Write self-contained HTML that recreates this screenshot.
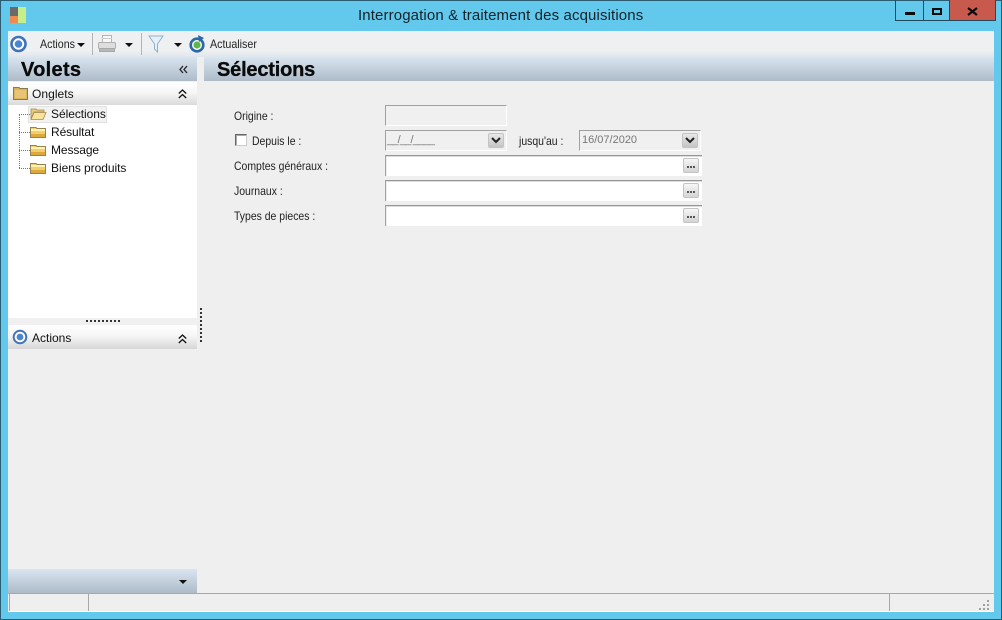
<!DOCTYPE html>
<html><head><meta charset="utf-8">
<style>
html,body{margin:0;padding:0}
body{width:1002px;height:620px;overflow:hidden;position:relative;background:#62c9ec;font-family:"Liberation Sans",sans-serif;font-size:12px;color:#111}
div,span,svg{position:absolute;box-sizing:border-box}
.t{white-space:nowrap;line-height:14px}
.l{font-size:12px;color:#222;transform:scaleX(.87);transform-origin:0 0}
.head{background:linear-gradient(#d9e5f0,#adbbc9)}
.inp{background:#fff;border-top:1px solid #969696;border-left:1px solid #a4a4a4;box-shadow:inset 0 1px #dcdcdc,inset 1px 0 #ececec;height:21px}
.dis{background:#f0f0f0;border-top:1px solid #a0a0a0;border-left:1px solid #a0a0a0;border-right:1px solid #fff;border-bottom:1px solid #fff;height:21px}
.btn{width:16px;height:15px;border:1px solid #c4c4c4;border-radius:2px;background:linear-gradient(#f6f6f6,#d4d4d4)}
</style></head>
<body>
<div style="left:0;top:0;width:1002px;height:620px;border:1px solid #2b5d72"></div>
<!-- app icon -->
<div style="left:10px;top:7px;width:8px;height:9px;background:#6a6a6a"></div>
<div style="left:10px;top:16px;width:8px;height:7px;background:#f08a4e"></div>
<div style="left:18px;top:7px;width:8px;height:16px;background:#c6ee8a"></div>
<div class="t" style="left:358px;top:8px;font-size:15px;line-height:16px;letter-spacing:.12px;color:#15222a">Interrogation &amp; traitement des acquisitions</div>
<!-- window buttons -->
<div style="left:895px;top:0;width:29px;height:21px;border:1px solid #23495a;border-top:0;border-right:0"></div>
<div style="left:923px;top:0;width:27px;height:21px;border:1px solid #23495a;border-top:0"></div>
<div style="left:950px;top:0;width:46px;height:21px;background:#c75a4c;border:1px solid #23495a;border-top:0;border-left:0"></div>
<div style="left:905px;top:12px;width:10px;height:3px;background:#0c0c0c"></div>
<div style="left:932px;top:8px;width:10px;height:7px;border:2px solid #0c0c0c"></div>
<svg style="left:967px;top:7px" width="11" height="9"><path d="M1 1L10 8M10 1L1 8" stroke="#0c0c0c" stroke-width="2.2"/></svg>
<!-- client -->
<div style="left:8px;top:31px;width:986px;height:581px;background:#efefef"></div>
<!-- toolbar -->
<div style="left:8px;top:31px;width:986px;height:26px;background:linear-gradient(#eef0f1 0%,#eef0f1 75%,#dde6ee 100%)"></div>
<svg style="left:10px;top:35px" width="18" height="18"><circle cx="8.500" cy="9" r="7" fill="#fff" stroke="#3f72b8" stroke-width="2.600"/><circle cx="8.500" cy="9" r="3.800" fill="#4a86d0"/></svg>
<div class="t l" style="left:40px;top:37px;transform:scaleX(.89)">Actions</div>
<svg style="left:77px;top:43px" width="8" height="5"><path d="M0 0H8L4 4Z" fill="#111"/></svg>
<div style="left:92px;top:33px;width:1px;height:22px;background:#b4b4b4"></div>
<svg style="left:97px;top:34px" width="20" height="19"><rect x="5.500" y="1.500" width="9" height="7" fill="#f8f8f8" stroke="#b4b4b4"/><rect x="5" y="4" width="10" height="1" fill="#ccc"/><rect x="1.500" y="8.500" width="17" height="6" rx="1" fill="#dedede" stroke="#b0b0b0"/><rect x="2.500" y="14.500" width="15" height="3" fill="#b8b8b8" stroke="#a8a8a8"/></svg>
<svg style="left:125px;top:43px" width="9" height="5"><path d="M0 0H8L4 4Z" fill="#111"/></svg>
<div style="left:141px;top:33px;width:1px;height:22px;background:#b4b4b4"></div>
<svg style="left:148px;top:35px" width="17" height="18"><path d="M1 1H15L9.500 9V17L6.500 14V9Z" fill="#e6f0f6" stroke="#8db4cc"/></svg>
<svg style="left:174px;top:43px" width="9" height="5"><path d="M0 0H8L4 4Z" fill="#111"/></svg>
<svg style="left:188px;top:35px" width="18" height="18"><circle cx="9" cy="10" r="6.300" fill="#fff" stroke="#2c68a8" stroke-width="2.600"/><circle cx="9" cy="10" r="3.600" fill="#5cb848"/><path d="M10 0L16 3L11 7Z" fill="#2c68a8"/></svg>
<div class="t l" style="left:210px;top:37px;transform:scaleX(.89)">Actualiser</div>
<!-- left pane -->
<div class="head" style="left:8px;top:57px;width:189px;height:24px"></div>
<div class="t" style="left:21px;top:59px;font-size:20px;line-height:22px;font-weight:bold;letter-spacing:.3px;color:#0a0a0a;-webkit-text-stroke:.3px #0a0a0a">Volets</div>
<svg style="left:179px;top:65px" width="9" height="9"><path d="M4 1L1 4.500L4 8M8 1L5 4.500L8 8" fill="none" stroke="#222" stroke-width="1.300"/></svg>
<div style="left:8px;top:82px;width:189px;height:23px;background:linear-gradient(#fff 0%,#f6f6f6 45%,#dadada 100%)"></div>
<svg style="left:13px;top:86px" width="15" height="14"><path d="M.5 1.500H6L7 2.500H14.500V13.500H.5Z" fill="#d8b45c" stroke="#8a7a50"/><rect x="2" y="4" width="11" height="8" fill="#e8c474"/></svg>
<div class="t" style="left:32px;top:87px;letter-spacing:.05px">Onglets</div>
<svg style="left:178px;top:89px" width="9" height="10"><path d="M.8 4.500L4.500 1L8.200 4.500M.8 9L4.500 5.500L8.200 9" fill="none" stroke="#111" stroke-width="1.300"/></svg>
<!-- tree -->
<div style="left:8px;top:105px;width:189px;height:215px;background:#fff"></div>
<div style="left:28px;top:106px;width:79px;height:17px;background:#f2f2f2;border:1px solid #e2e2e2"></div>
<div style="left:19px;top:114px;width:1px;height:54px;border-left:1px dotted #777"></div>
<div style="left:19px;top:114px;width:11px;border-top:1px dotted #777"></div>
<div style="left:19px;top:132px;width:11px;border-top:1px dotted #777"></div>
<div style="left:19px;top:150px;width:11px;border-top:1px dotted #777"></div>
<div style="left:19px;top:168px;width:11px;border-top:1px dotted #777"></div>
<svg style="left:30px;top:108px" width="17" height="12"><path d="M1 1H6L7 2H14V4H4L1 11Z" fill="#e9cc7c" stroke="#a08a50" stroke-width=".8"/><path d="M4 4.500H16L13 11.500H1Z" fill="#fbe39a" stroke="#a08a50" stroke-width=".8"/></svg>
<svg style="left:30px;top:126px" width="16" height="12"><path d="M.5 1.500H6L7 2.500H15.500V11.500H.5Z" fill="#f2cf6c" stroke="#93834f"/><rect x="1" y="3" width="14" height="2" fill="#fff1b8"/><rect x="1" y="8" width="14" height="3" fill="#dcaa3c"/></svg>
<svg style="left:30px;top:144px" width="16" height="12"><path d="M.5 1.500H6L7 2.500H15.500V11.500H.5Z" fill="#f2cf6c" stroke="#93834f"/><rect x="1" y="3" width="14" height="2" fill="#fff1b8"/><rect x="1" y="8" width="14" height="3" fill="#dcaa3c"/></svg>
<svg style="left:30px;top:162px" width="16" height="12"><path d="M.5 1.500H6L7 2.500H15.500V11.500H.5Z" fill="#f2cf6c" stroke="#93834f"/><rect x="1" y="3" width="14" height="2" fill="#fff1b8"/><rect x="1" y="8" width="14" height="3" fill="#dcaa3c"/></svg>
<div class="t" style="left:51px;top:107px;letter-spacing:-.05px">Sélections</div>
<div class="t" style="left:51px;top:125px;letter-spacing:-.1px">Résultat</div>
<div class="t" style="left:51px;top:143px;letter-spacing:-.1px">Message</div>
<div class="t" style="left:51px;top:161px;letter-spacing:-.05px">Biens produits</div>
<!-- splitter -->
<div style="left:8px;top:318px;width:189px;height:7px;background:#f0f0f0"></div>
<div style="left:86px;top:320px;width:35px;height:2px;background:repeating-linear-gradient(90deg,#333 0 2px,transparent 2px 4px)"></div>
<div style="left:200px;top:308px;width:1.500px;height:35px;background:repeating-linear-gradient(#333 0 2px,transparent 2px 4px)"></div>
<div style="left:8px;top:325px;width:189px;height:24px;background:linear-gradient(#fff 0%,#f6f6f6 45%,#d6d6d6 100%)"></div>
<svg style="left:12px;top:329px" width="16" height="16"><circle cx="8" cy="8" r="6.300" fill="#fff" stroke="#4474b4" stroke-width="2"/><circle cx="8" cy="8" r="3.400" fill="#4a86d0"/></svg>
<div class="t" style="left:32px;top:331px">Actions</div>
<svg style="left:178px;top:334px" width="9" height="10"><path d="M.8 4.500L4.500 1L8.200 4.500M.8 9L4.500 5.500L8.200 9" fill="none" stroke="#111" stroke-width="1.300"/></svg>
<div class="head" style="left:8px;top:569px;width:189px;height:24px"></div>
<svg style="left:179px;top:580px" width="9" height="5"><path d="M0 0H8L4 4Z" fill="#111"/></svg>
<!-- right header -->
<div class="head" style="left:204px;top:57px;width:790px;height:24px"></div>
<div class="t" style="left:217px;top:59px;font-size:20px;line-height:22px;font-weight:bold;letter-spacing:-.2px;color:#0a0a0a;-webkit-text-stroke:.3px #0a0a0a">Sélections</div>
<!-- form -->
<div class="t l" style="left:234px;top:109px">Origine :</div>
<div class="dis" style="left:385px;top:105px;width:122px"></div>
<div style="left:235px;top:134px;width:12px;height:12px;background:#fff;border:1px solid #666;border-right-color:#ccc;border-bottom-color:#ccc;box-shadow:inset 1px 1px #aaa"></div>
<div class="t l" style="left:252px;top:134px">Depuis le :</div>
<div class="dis" style="left:385px;top:130px;width:122px"></div>
<div class="t" style="left:387px;top:133px;color:#777;font-size:11px;letter-spacing:-.8px">__/__/____</div>
<div class="btn" style="left:488px;top:133px;background:linear-gradient(#e8e8e8,#c4c4c4)"></div>
<svg style="left:491px;top:137px" width="10" height="7"><path d="M1 1L5 5L9 1" fill="none" stroke="#222" stroke-width="2"/></svg>
<div class="t l" style="left:519px;top:134px">jusqu'au :</div>
<div class="dis" style="left:579px;top:130px;width:122px"></div>
<div class="t" style="left:582px;top:133px;color:#777;font-size:11px">16/07/2020</div>
<div class="btn" style="left:682px;top:133px;background:linear-gradient(#e8e8e8,#c4c4c4)"></div>
<svg style="left:685px;top:137px" width="10" height="7"><path d="M1 1L5 5L9 1" fill="none" stroke="#222" stroke-width="2"/></svg>
<div class="t l" style="left:234px;top:159px">Comptes généraux :</div>
<div class="inp" style="left:385px;top:155px;width:317px"></div>
<div class="btn" style="left:683px;top:158px"></div>
<div style="left:687px;top:166px;width:8px;height:2px;background:repeating-linear-gradient(90deg,#555 0 2px,transparent 2px 3px)"></div>
<div class="t l" style="left:234px;top:184px">Journaux :</div>
<div class="inp" style="left:385px;top:180px;width:317px"></div>
<div class="btn" style="left:683px;top:183px"></div>
<div style="left:687px;top:191px;width:8px;height:2px;background:repeating-linear-gradient(90deg,#555 0 2px,transparent 2px 3px)"></div>
<div class="t l" style="left:234px;top:209px">Types de pieces :</div>
<div class="inp" style="left:385px;top:205px;width:317px"></div>
<div class="btn" style="left:683px;top:208px"></div>
<div style="left:687px;top:216px;width:8px;height:2px;background:repeating-linear-gradient(90deg,#555 0 2px,transparent 2px 3px)"></div>
<!-- status bar -->
<div style="left:8px;top:593px;width:986px;height:19px;background:#efefef;border-top:1px solid #a8a8a8;border-bottom:1px solid #fff"></div>
<div style="left:9px;top:594px;width:1px;height:17px;background:#a8a8a8"></div>
<div style="left:88px;top:594px;width:1px;height:17px;background:#a8a8a8"></div>
<div style="left:889px;top:594px;width:1px;height:17px;background:#a8a8a8"></div>
<svg style="left:978px;top:598px" width="13" height="13" fill="#a0a0a0"><rect x="9" y="2" width="2" height="2"/><rect x="5" y="6" width="2" height="2"/><rect x="9" y="6" width="2" height="2"/><rect x="1" y="10" width="2" height="2"/><rect x="5" y="10" width="2" height="2"/><rect x="9" y="10" width="2" height="2"/></svg>
</body></html>
